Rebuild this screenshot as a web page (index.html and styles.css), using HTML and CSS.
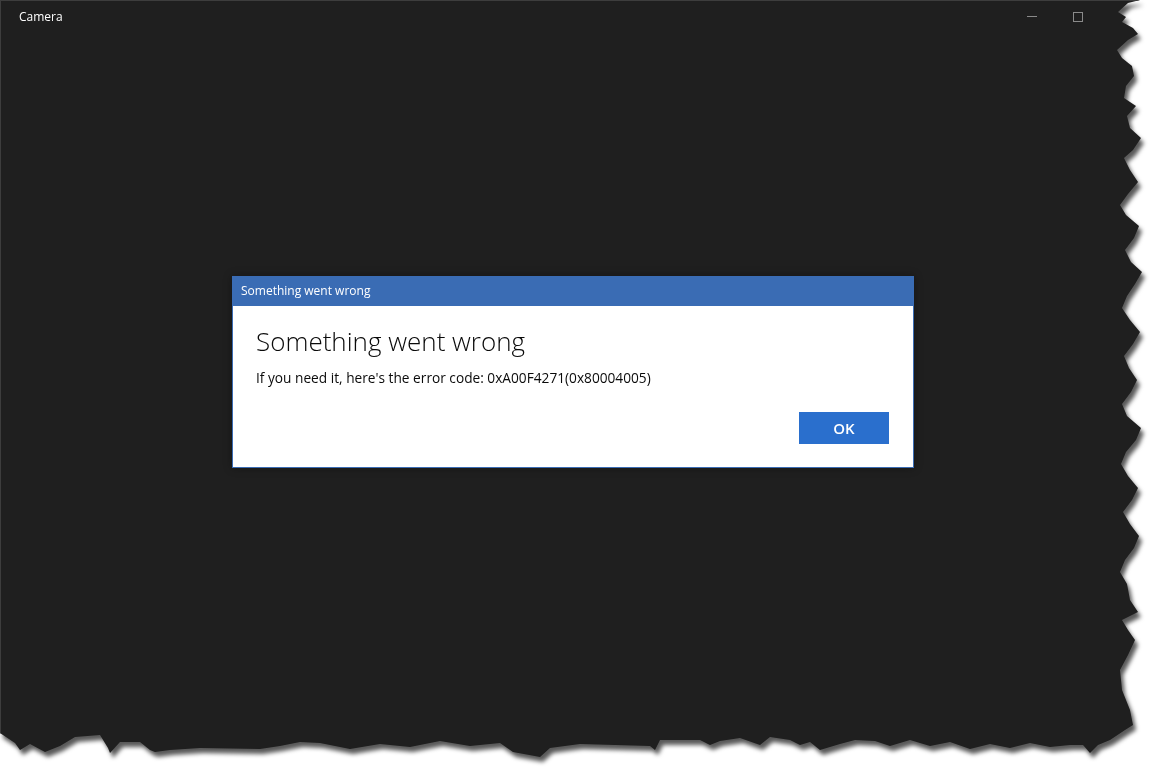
FILE: index.html
```html
<!DOCTYPE html>
<html lang="en">
<head>
    <meta charset="UTF-8">
    <meta name="viewport" content="width=device-width, initial-scale=1.0">
    <title>Camera</title>
    <link rel="stylesheet" href="styles.css">
</head>
<body>

    <div class="shot">
        <div class="window">
            <div class="titlebar">
                <span class="app-title">Camera</span>
                <div class="caption">
                    <span class="cap-btn"><span class="ico-min"></span></span>
                    <span class="cap-btn"><span class="ico-max"></span></span>
                    <span class="cap-btn cap-close"></span>
                </div>
            </div>

            <!-- hata penceresi -->
            <div class="dialog">
                <div class="dialog-head">Something went wrong</div>
                <div class="dialog-body">
                    <h1>Something went wrong</h1>
                    <p>If you need it, here's the error code: 0xA00F4271(0x80004005)</p>
                    <div class="actions">
                        <button class="ok">OK</button>
                    </div>
                </div>
            </div>
        </div>
    </div>

</body>
</html>
```

FILE: styles.css
```css
body {
    margin: 0;
    background-color: #fff;
    font-family: "Open Sans", "Noto Sans", sans-serif;
}
.shot {
    width: 1162px;
    height: 778px;
    filter: drop-shadow(3px 5px 2px rgba(0, 0, 0, 0.65));
}
/* yırtık kenar efekti */
.window {
    width: 1145px;
    height: 760px;
    box-sizing: border-box;
    background-color: #1f1f1f;
    border-top: 1px solid #3d3d3d;
    border-left: 1px solid #3d3d3d;
    clip-path: polygon(0 0, 1140px 0, 1128px 3px, 1118px 12px, 1126px 17px, 1122px 22px, 1133px 28px, 1138px 34px, 1128px 40px, 1117px 50px, 1122px 58px, 1132px 66px, 1134px 76px, 1126px 86px, 1124px 98px, 1136px 106px, 1127px 116px, 1130px 128px, 1141px 138px, 1133px 150px, 1124px 158px, 1130px 170px, 1138px 182px, 1128px 194px, 1120px 205px, 1126px 215px, 1139px 226px, 1134px 238px, 1125px 250px, 1131px 262px, 1142px 272px, 1135px 284px, 1127px 296px, 1122px 308px, 1130px 320px, 1140px 332px, 1133px 344px, 1124px 356px, 1129px 368px, 1137px 380px, 1131px 392px, 1122px 404px, 1127px 416px, 1141px 428px, 1136px 440px, 1126px 452px, 1121px 464px, 1128px 476px, 1138px 488px, 1132px 500px, 1123px 512px, 1130px 524px, 1139px 536px, 1134px 548px, 1125px 560px, 1120px 572px, 1127px 584px, 1130px 600px, 1138px 612px, 1122px 620px, 1128px 630px, 1135px 640px, 1128px 655px, 1120px 670px, 1122px 690px, 1130px 710px, 1133px 725px, 1125px 730px, 1110px 740px, 1098px 745px, 1090px 753px, 1083px 745px, 1070px 745px, 1050px 747px, 1030px 743px, 1010px 748px, 990px 744px, 970px 749px, 950px 742px, 930px 746px, 910px 740px, 890px 746px, 875px 741px, 855px 740px, 840px 744px, 820px 750px, 810px 742px, 800px 745px, 790px 740px, 770px 737px, 760px 745px, 740px 738px, 720px 741px, 710px 745px, 700px 740px, 660px 740px, 655px 750px, 650px 746px, 580px 744px, 550px 748px, 540px 757px, 513px 752px, 500px 743px, 470px 746px, 440px 741px, 410px 747px, 380px 744px, 350px 749px, 320px 743px, 300px 742px, 280px 746px, 260px 749px, 200px 748px, 170px 750px, 155px 752px, 150px 750px, 140px 742px, 120px 742px, 110px 753px, 108px 748px, 100px 735px, 75px 737px, 60px 746px, 45px 752px, 30px 744px, 20px 750px, 15px 743px, 0 733px);
}
.titlebar {
    display: flex;
    align-items: center;
    justify-content: space-between;
    height: 31px;
    padding-left: 18px;
    color: #fff;
    font-size: 12px;
}
.caption {
    display: flex;
    height: 100%;
}
.cap-btn {
    width: 46px;
    display: flex;
    align-items: center;
    justify-content: center;
}
.cap-close {
    width: 44px;
}
.ico-min {
    width: 10px;
    height: 1px;
    background-color: #8a8a8a;
}
.ico-max {
    width: 8px;
    height: 8px;
    border: 1px solid #8a8a8a;
}
.dialog {
    width: 682px;
    margin: 244px auto 0;
    box-sizing: border-box;
    border: 1px solid #3a6cb4;
    border-top: none;
    background-color: #fff;
    box-shadow: 0 0 8px rgba(0, 0, 0, 0.35);
}
.dialog-head {
    height: 30px;
    line-height: 30px;
    padding-left: 8px;
    background-color: #3a6cb4;
    color: #fff;
    font-size: 12px;
}
.dialog-body {
    padding: 18px 24px 23px 23px;
    color: #0a0a0a;
}
h1 {
    margin: 0;
    font-size: 26px;
    font-weight: 300;
    line-height: 34px;
}
p {
    margin: 10px 0 0;
    font-size: 13.7px;
    line-height: 20px;
}
.actions {
    display: flex;
    justify-content: flex-end;
    margin-top: 24px;
}
.ok {
    width: 90px;
    height: 32px;
    border: none;
    background-color: #2a6fcd;
    color: #fff;
    font-family: "Open Sans", sans-serif;
    font-size: 15px;
    font-weight: 600;
}
```
